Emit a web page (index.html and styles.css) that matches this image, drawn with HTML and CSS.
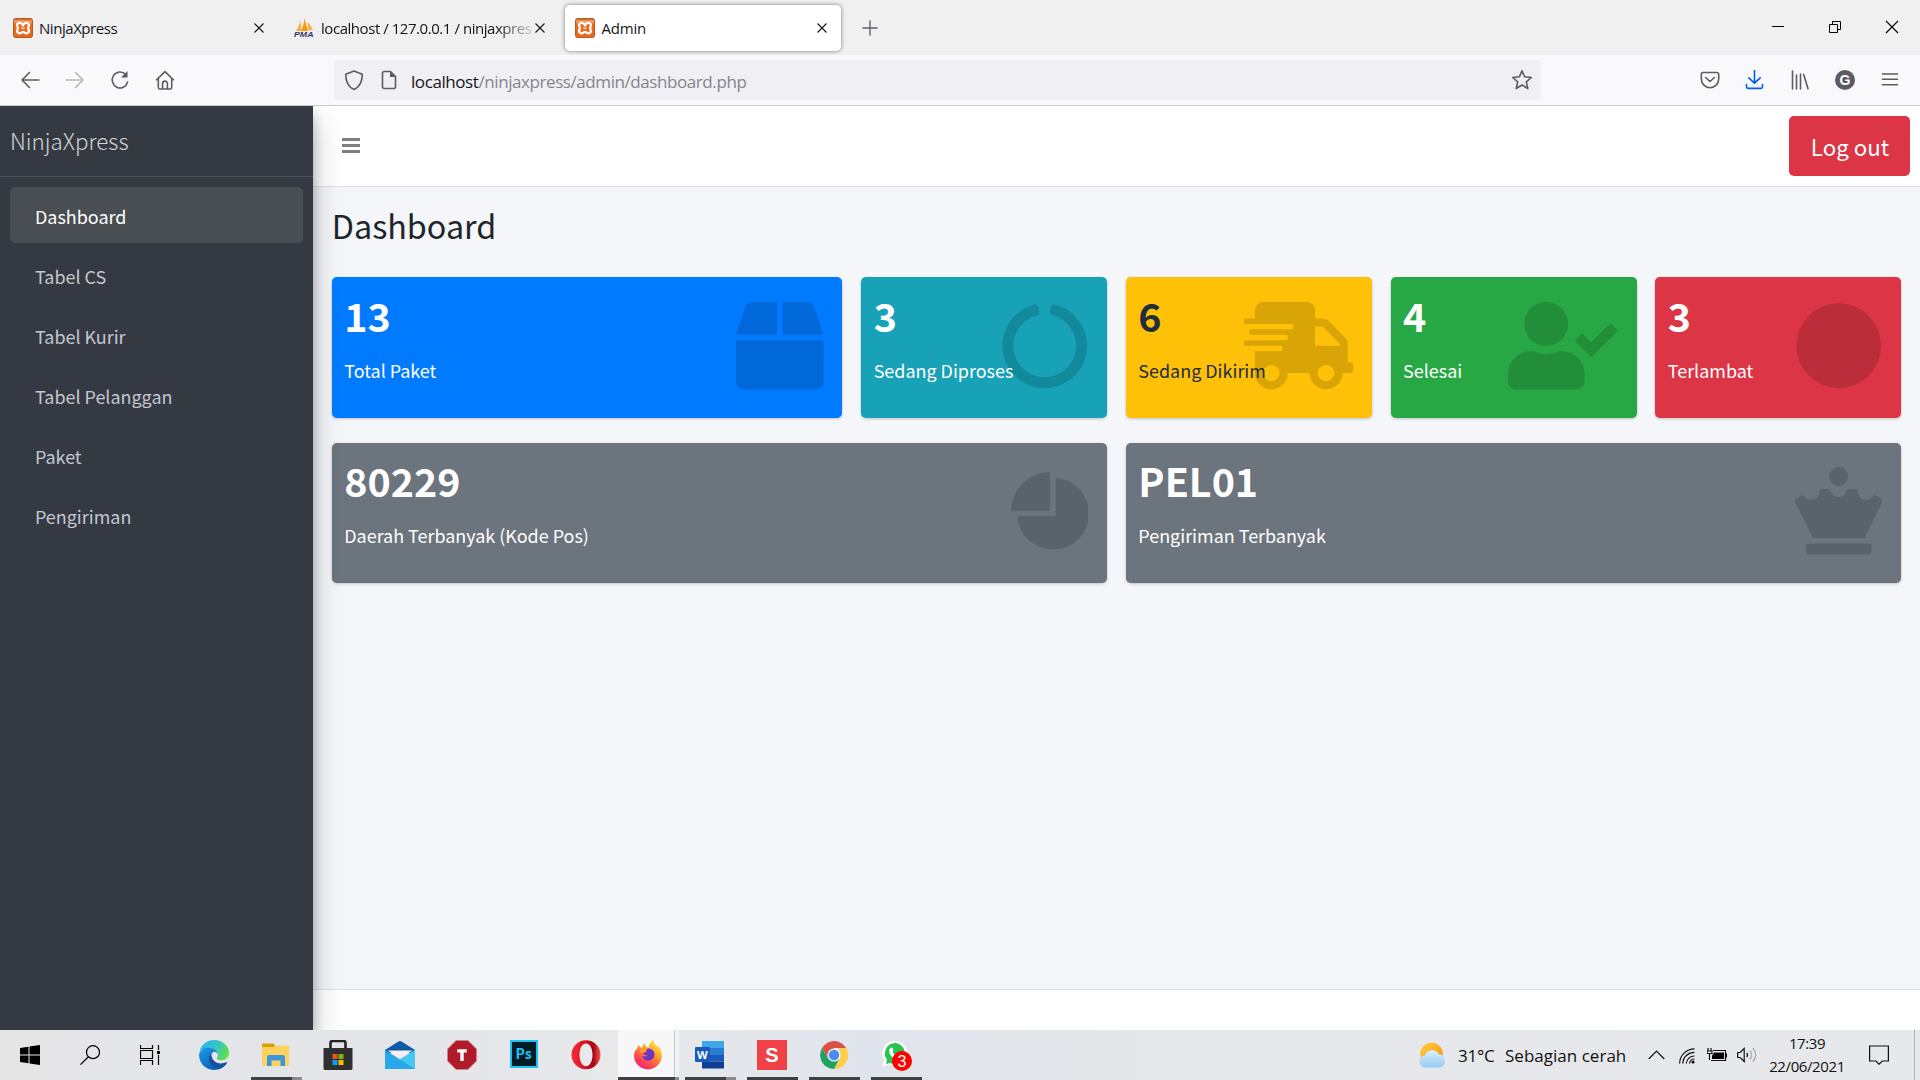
FILE: index.html
```html
<!DOCTYPE html>
<html lang="id">
<head>
<meta charset="utf-8">
<title>Admin</title>
<link rel="stylesheet" href="styles.css">
</head>
<body>
<svg class="defs" width="0" height="0">
  <defs>
    <linearGradient id="xamppFill" x1="0" y1="0" x2="0" y2="1"><stop offset="0" stop-color="#a9551b"/><stop offset=".14" stop-color="#f9a468"/><stop offset=".3" stop-color="#ec6f1c"/><stop offset="1" stop-color="#e9661a"/></linearGradient>
    <symbol id="xampp" viewBox="0 0 20 20">
      <rect x=".5" y=".5" width="19" height="19" rx="2" fill="url(#xamppFill)" stroke="#b65a1d"/>
      <path d="M10 7.500C9.500 5.500 8.200 4.800 6.700 4.800 4.200 4.800 3.600 6.800 4.400 8.300c.7 1.200.7 2.200 0 3.400-.8 1.700 0 3.600 2.300 3.600 1.700 0 1.800-1.500 3.300-1.500s1.600 1.500 3.300 1.500c2.300 0 3.100-1.900 2.300-3.600-.7-1.200-.7-2.200 0-3.400.8-1.500.2-3.500-2.300-3.500-1.500 0-2.800.7-3.300 2.700z" fill="none" stroke="#fff" stroke-width="2.300" stroke-linejoin="round"/>
      <path d="M8.300 10.200h3.400" fill="none" stroke="#fff" stroke-width="1"/>
    </symbol>
    <symbol id="cross" viewBox="0 0 10 10"><path d="M.5.5l9 9m0-9l-9 9" fill="none" stroke="currentColor" stroke-width="1.1"/></symbol>
  </defs>
</svg>

<div class="screen">
  <header class="tabstrip">
    <div class="tab tab-first">
      <svg class="favicon"><use href="#xampp"/></svg>
      <span class="tab-title">NinjaXpress</span>
      <svg class="tab-close"><use href="#cross"/></svg>
    </div>
    <div class="tab tab-second">
      <svg class="favicon" viewBox="0 0 20 20">
        <path d="M2 13C4 10 5.500 6 6 2l2 11z" fill="#f7b14a"/><path d="M7.500 13C9 9 10 4 10.300 0L14 13z" fill="#f89c0e"/><path d="M14 12c0-3 .3-6-.6-8.500C15.500 6 17.500 9 19 12z" fill="#fbb040"/>
        <text x="0" y="19" class="pma" textLength="19.500" lengthAdjust="spacingAndGlyphs">PMA</text>
      </svg>
      <span class="tab-title tab-title-faded">localhost / 127.0.0.1 / ninjaxpres</span>
      <svg class="tab-close"><use href="#cross"/></svg>
    </div>
    <div class="tab tab-active">
      <svg class="favicon"><use href="#xampp"/></svg>
      <span class="tab-title">Admin</span>
      <svg class="tab-close"><use href="#cross"/></svg>
    </div>
    <svg class="new-tab" viewBox="0 0 16 16"><path d="M8 .5v15M.5 8h15" stroke="#5b5b66" stroke-width="1.300"/></svg>
    <div class="window-controls">
      <svg width="14" height="14" viewBox="0 0 14 14"><path d="M1 6.500h12" stroke="#000"/></svg>
      <svg width="14" height="14" viewBox="0 0 14 14"><path d="M1.500 4.500h8v8h-8zM4.500 4V1.500h8v8H10" fill="none" stroke="#000"/></svg>
      <svg width="14" height="14" viewBox="0 0 14 14"><path d="M1 1l12 12m0-12L1 13" stroke="#000" stroke-width="1.100"/></svg>
    </div>
  </header>

  <div class="toolbar">
    <div class="nav-buttons">
      <svg width="20" height="20" viewBox="0 0 20 20"><path d="M19 10H2m7.500-7.500L2 10l7.500 7.500" class="line"/></svg>
      <svg width="20" height="20" viewBox="0 0 20 20" class="muted"><path d="M1 10h17m-7.500-7.500L18 10l-7.500 7.500" class="line"/></svg>
      <svg width="20" height="20" viewBox="0 0 20 20"><path d="M15.500 4.200A7.800 8 0 1 0 17.600 12" class="line"/><path d="M17.500 1v6.500H11z" fill="#5b5b66"/></svg>
      <svg width="20" height="20" viewBox="0 0 20 20"><path d="M1.600 9.800L10 1.600l8.400 8.200M3.300 8.500v9a1.500 1.500 0 0 0 1.500 1.500h10.400a1.500 1.500 0 0 0 1.500-1.500v-9M7.600 19v-5.500a2.400 2.400 0 0 1 4.800 0V19" class="line"/></svg>
    </div>
    <div class="urlbar">
      <svg width="20" height="22" viewBox="0 0 20 22"><path d="M10 2l8.300 3.300c0 7-2.500 12.700-8.300 15.200C4.200 18 1.700 12.300 1.700 5.300z" class="line"/></svg>
      <svg width="16" height="20" viewBox="0 0 16 20"><path d="M9.500 1.500H3.200A1.700 1.700 0 0 0 1.500 3.200v13.600a1.700 1.700 0 0 0 1.700 1.700h9.600a1.700 1.700 0 0 0 1.700-1.700V6.500z" class="line"/><path d="M9 1.500v5.500h5.500z" fill="#5b5b66"/></svg>
      <span class="url"><b>localhost</b>/ninjaxpress/admin/dashboard.php</span>
      <svg class="star" width="22" height="22" viewBox="0 0 22 22"><path d="M11 1.800l2.700 6 6.600.7-5 4.300 1.500 6.700L11 16l-5.800 3.500 1.500-6.700-5-4.300 6.600-.7z" class="line"/></svg>
    </div>
    <div class="tools">
      <svg width="20" height="20" viewBox="0 0 20 20"><path d="M3 2.500h14a1.700 1.700 0 0 1 1.700 1.700V9a8.700 8.700 0 0 1-17.400 0V4.200A1.700 1.700 0 0 1 3 2.500zM5.700 7.500l4.300 4 4.300-4" class="line"/></svg>
      <svg width="20" height="20" viewBox="0 0 20 20"><path d="M9.500 0v13M3.800 7.800L9.500 13.200l5.700-5.400M1.500 14.500v2.300a1.600 1.600 0 0 0 1.600 1.600h12.800a1.600 1.600 0 0 0 1.600-1.600v-2.300" class="line blue"/></svg>
      <svg width="20" height="20" viewBox="0 0 20 20"><path d="M2.500 1v18M6.500 5v14M10.500 4v15M13.700 4.500L18 18.800" class="line"/></svg>
      <span class="account">G</span>
      <svg width="20" height="20" viewBox="0 0 20 20"><path d="M2.500 4h15M2.500 9.300h15M2.500 14.700h15" class="line"/></svg>
    </div>
  </div>

  <div class="page">
    <aside class="sidebar">
      <div class="brand">NinjaXpress</div>
      <nav class="menu">
        <a class="menu-item current">Dashboard</a>
        <a class="menu-item">Tabel CS</a>
        <a class="menu-item">Tabel Kurir</a>
        <a class="menu-item">Tabel Pelanggan</a>
        <a class="menu-item">Paket</a>
        <a class="menu-item">Pengiriman</a>
      </nav>
    </aside>
    <div class="content">
      <div class="navbar">
        <svg width="18" height="16" viewBox="0 0 18 16"><path d="M0 1.500h18M0 7.500h18M0 13.500h18" stroke="#7f7f7f" stroke-width="3"/></svg>
        <button class="logout">Log out</button>
      </div>
      <main class="main">
        <h1 class="title">Dashboard</h1>
        <div class="boxes">
          <div class="box span4 primary"><strong>13</strong><span>Total Paket</span>
            <svg class="box-icon" viewBox="0 0 512 512"><path d="M509.500 184.600L458.900 32.800C452.400 13.200 434.100 0 413.400 0H272v192h238.700c-.4-2.500-.4-5-1.200-7.400zM240 0H98.600c-20.700 0-39 13.200-45.500 32.800L2.500 184.600c-.8 2.400-.8 4.900-1.200 7.400H240V0zM0 224v240c0 26.500 21.500 48 48 48h416c26.500 0 48-21.500 48-48V224H0z"/></svg>
          </div>
          <div class="box span2 info"><strong>3</strong><span>Sedang Diproses</span>
            <svg class="box-icon" viewBox="0 0 512 512"><path d="M288 39.056v16.659c0 10.804 7.281 20.159 17.686 23.066C383.204 100.434 440 171.518 440 256c0 101.689-82.295 184-184 184-101.689 0-184-82.295-184-184 0-84.470 56.786-155.564 134.312-177.219C216.719 75.874 224 66.517 224 55.712V39.064c0-15.709-14.834-27.153-30.046-23.234C86.603 43.482 7.394 141.206 8.003 257.332c.72 137.052 111.477 246.956 248.531 246.667C393.255 503.711 504 392.788 504 256c0-115.633-79.140-212.779-186.211-240.236C302.678 11.889 288 23.456 288 39.056z"/></svg>
          </div>
          <div class="box span2 warning"><strong>6</strong><span>Sedang Dikirim</span>
            <svg class="box-icon wide" viewBox="0 0 640 512"><path d="M624 352h-16V243.900c0-12.700-5.100-24.900-14.100-33.900L494 110.100c-9-9-21.200-14.100-33.900-14.100H416V48c0-26.500-21.500-48-48-48H112C85.500 0 64 21.500 64 48v48H8c-4.400 0-8 3.600-8 8v16c0 4.400 3.600 8 8 8h272c4.400 0 8 3.600 8 8v16c0 4.400-3.600 8-8 8H40c-4.400 0-8 3.600-8 8v16c0 4.400 3.600 8 8 8h208c4.400 0 8 3.600 8 8v16c0 4.400-3.600 8-8 8H8c-4.400 0-8 3.600-8 8v16c0 4.400 3.600 8 8 8h208c4.400 0 8 3.600 8 8v16c0 4.400-3.600 8-8 8H64v128c0 53 43 96 96 96s96-43 96-96h128c0 53 43 96 96 96s96-43 96-96h48c8.800 0 16-7.200 16-16v-32c0-8.800-7.200-16-16-16zM160 464c-26.500 0-48-21.500-48-48s21.500-48 48-48 48 21.500 48 48-21.500 48-48 48zm320 0c-26.500 0-48-21.500-48-48s21.500-48 48-48 48 21.500 48 48-21.500 48-48 48zm80-208H416V144h44.100l99.900 99.900V256z"/></svg>
          </div>
          <div class="box span2 success"><strong>4</strong><span>Selesai</span>
            <svg class="box-icon wide" viewBox="0 0 640 512"><path d="M224 256c70.700 0 128-57.300 128-128S294.700 0 224 0 96 57.300 96 128s57.300 128 128 128zm89.600 32h-16.700c-22.200 10.200-46.900 16-72.900 16s-50.600-5.800-72.900-16h-16.700C60.200 288 0 348.200 0 422.400V464c0 26.500 21.500 48 48 48h352c26.500 0 48-21.500 48-48v-41.600c0-74.200-60.200-134.400-134.400-134.400zm323-128.400l-27.800-28.100c-4.600-4.700-12.100-4.700-16.800-.1l-104.800 104-45.500-45.800c-4.600-4.700-12.100-4.700-16.800-.1l-28.100 27.900c-4.700 4.600-4.700 12.100-.1 16.800l81.700 82.300c4.600 4.700 12.100 4.700 16.800.1l141.300-140.200c4.600-4.700 4.700-12.200.1-16.800z"/></svg>
          </div>
          <div class="box span2 danger"><strong>3</strong><span>Terlambat</span>
            <svg class="box-icon" viewBox="0 0 512 512"><circle cx="256" cy="256" r="248"/></svg>
          </div>
          <div class="box span6 secondary"><strong>80229</strong><span>Daerah Terbanyak (Kode Pos)</span>
            <svg class="box-icon pie" viewBox="0 0 77 77"><path d="M39 0A39 39 0 0 0 0 39h38a1 1 0 0 0 1-1zM44.700 5.700A36 36 0 1 1 6.200 44H43.700a1 1 0 0 0 1-1z"/></svg>
          </div>
          <div class="box span6 secondary"><strong>PEL01</strong><span>Pengiriman Terbanyak</span>
            <svg class="box-icon queen" viewBox="0 0 512 512"><path d="M256 112a56 56 0 1 1 56-56 56 56 0 0 1-56 56zm176 336H80a16 16 0 0 0-16 16v32a16 16 0 0 0 16 16h352a16 16 0 0 0 16-16v-32a16 16 0 0 0-16-16zm72.870-263.840l-28.510-15.920c-7.440-5-16.910-2.460-22.290 4.680a47.590 47.590 0 0 1-47.230 18.230C383.700 186.860 368 164.930 368 141.400a13.400 13.400 0 0 0-13.400-13.400h-38.770c-6 0-11.610 4-12.860 9.910a48 48 0 0 1-93.940 0c-1.230-5.920-6.820-9.910-12.860-9.910H157.400a13.400 13.400 0 0 0-13.400 13.400c0 25.690-19 48.750-44.670 50.490a47.500 47.500 0 0 1-41.540-19.150c-5.280-7.090-14.730-9.450-22.090-4.540l-28.570 16a16 16 0 0 0-5.440 20.470L104.240 416h303.520l102.550-211.370a16 16 0 0 0-5.440-20.470z"/></svg>
          </div>
        </div>
      </main>
      <div class="footer"></div>
    </div>
  </div>

  <footer class="taskbar">
    <div class="system">
      <svg width="20" height="20" viewBox="0 0 20 20"><path d="M0 3l8.500-1.200v7.700H0zM9.500 1.600L20 0v9.500H9.500zM0 10.500h8.500v7.700L0 17zM9.500 10.500H20V20L9.500 18.400z"/></svg>
      <svg width="20" height="20" viewBox="0 0 20 20" class="thin"><circle cx="13" cy="7.200" r="6.500"/><path d="M8.400 11.800L.5 19.600"/></svg>
      <svg width="20" height="20" viewBox="0 0 20 20" class="thin"><path d="M.5 0v3.500h12V0M.5 20v-4.500h12V20M.5 5.500h12v8H.5zM18.500 0v5M18.500 10v10" /><path d="M17 6h3v3h-3z" fill="#000" stroke="none"/></svg>
    </div>
    <div class="apps">
      <div class="app"><svg viewBox="0 0 30 30">
        <defs><linearGradient id="e1" x1="0" y1=".2" x2="1" y2=".6"><stop offset="0" stop-color="#2bb3ef"/><stop offset=".5" stop-color="#2fc5c9"/><stop offset="1" stop-color="#62e04a"/></linearGradient><linearGradient id="e2" x1="0" y1="0" x2=".5" y2="1"><stop offset="0" stop-color="#1f9be6"/><stop offset="1" stop-color="#0b63c0"/></linearGradient></defs>
        <path d="M.8 11C2.500 4 8.500 0 15 0c8.500 0 15 6 15 13 0 4.500-3.500 7.200-7.500 7.200-3.500 0-5-1.200-4.700-2.200.3-.9 1.200-1.500 1.200-3.500C19 11 15 8.500 11 8.500 6 8.500 2.500 10 .8 11z" fill="url(#e1)"/>
        <path d="M0 15C.3 10.500 5 7.800 9.500 7.800c5 0 9 3 9.300 6.200-1-1.800-2.700-2.300-4-2.300-2.300 1.500-4 4-4 7.300 0 5 4 9.500 8.700 10.300A15 15 0 0 1 0 15z" fill="url(#e2)"/>
        <path d="M12.300 13.200C9.500 16 9 21 12 25c2.200 3 5.500 4.500 8 4.200 3.500-1 6.500-3.500 8-6.200.3-.8-.3-1-.8-.7-1.700.8-3.400 1.100-5.200 1.100-5.500 0-9.700-3.500-9.700-10.200z" fill="#1252a0"/></svg></div>
      <div class="app open more"><svg viewBox="0 0 30 30"><path d="M1 4.500a1 1 0 0 1 1-1h10.500l1.500 2V12H1z" fill="#e09c06"/><path d="M1 7h12.500l2-1.500H28V25a1 1 0 0 1-1 1H2a1 1 0 0 1-1-1z" fill="#ffd25e"/><path d="M6 26v-9a2 2 0 0 1 2-2h14a2 2 0 0 1 2 2v9h-4.500v-5.500h-9V26z" fill="#3a96dd"/></svg></div>
      <div class="app"><svg viewBox="0 0 30 30"><path d="M7.500 9V3a2 2 0 0 1 2-2h11a2 2 0 0 1 2 2v6" fill="none" stroke="#222" stroke-width="2.600"/><path d="M.5 8h29v20.500a1.500 1.500 0 0 1-1.500 1.500H2A1.500 1.500 0 0 1 .5 28.500z" fill="#303030"/><path fill="#f25022" d="M9.500 14h5v5h-5z"/><path fill="#7fba00" d="M15.500 14h5v5h-5z"/><path fill="#00a4ef" d="M9.500 20h5v5h-5z"/><path fill="#ffb900" d="M15.500 20h5v5h-5z"/></svg></div>
      <div class="app"><svg viewBox="0 0 30 30"><path d="M0 10l13.500-8.500a3 3 0 0 1 3 0L30 10v3H0z" fill="#0c59a4"/><path d="M0 10l15 9.500L30 10v19H0z" fill="#28a8ea"/><path d="M30 10v19L15 19.500z" fill="#45c7f4"/><path d="M2.500 10.500h25L15 18.500z" fill="#f3f1f0"/></svg></div>
      <div class="app"><svg viewBox="0 0 30 30"><path d="M9 .5h12L29.500 9v12L21 29.500H9L.5 21V9z" fill="#b11a2b" stroke="#d08a92" stroke-width=".7"/><path d="M10.300 9.300h9.400v3.200h-3V21h-3.400v-8.500h-3z" fill="#fff"/></svg></div>
      <div class="app"><svg viewBox="0 0 30 30"><path d="M1 0h28v28H1z" fill="#1cc3f5"/><path d="M3 2h24v24H3z" fill="#001d26"/><text x="6.500" y="19" class="ps">Ps</text></svg></div>
      <div class="app"><svg viewBox="0 0 30 30"><defs><linearGradient id="o1" x1="0" y1="0" x2="1" y2="0"><stop offset="0" stop-color="#fa2b3e"/><stop offset=".5" stop-color="#d3101f"/><stop offset=".75" stop-color="#9e0610"/><stop offset="1" stop-color="#ff5252"/></linearGradient></defs><path fill-rule="evenodd" d="M15 .3a14.500 14.500 0 1 0 0 29 14.500 14.500 0 1 0 0-29zm0 3.200c4 0 6.500 5 6.500 11.300S19 26.200 15 26.200 8.500 21 8.500 14.800 11 3.500 15 3.500z" fill="url(#o1)"/></svg></div>
      <div class="app open focus more"><svg viewBox="0 0 30 30"><defs><linearGradient id="f1" x1=".8" y1="0" x2=".2" y2="1"><stop offset="0" stop-color="#fff04a"/><stop offset=".35" stop-color="#ffa928"/><stop offset=".7" stop-color="#ff4a4c"/><stop offset="1" stop-color="#e51d83"/></linearGradient></defs><path d="M4.500 8c0-1.500.5-2.500 1-3 .5 1.500 2 2.500 3.500 3 0-2 1.500-4 3-5-.2 2 .5 3 2.500 4.500h1.500C15.500 4.500 18 1 21 0c-.5 3 1 4.500 3.500 6.500L25 6c1 1 3.800 4.500 3.800 9.500A13.900 13.900 0 0 1 1 15.500C1 12 3 9.500 4.500 8z" fill="url(#f1)"/><path d="M9.500 13c0-2 2-4 5.500-4.500 4 0 6.500 2.500 6.500 6a6 6 0 0 1-6 6.200c-3.500 0-6-2.200-6-5 1.500 1.200 4 1 5-.2-2.500.2-4-1.500-5-2.500z" fill="#6a35c9"/><path d="M7 10c2-1.500 5-2 8-1.500-1.500 1-2 2-1.500 3.500-1.500 0-2.500 1-4 1.200-1.500 0-2.500-1.200-2.500-3.200z" fill="#ff9a2a"/></svg></div>
      <div class="app open more"><svg viewBox="0 0 30 30"><path d="M7 1h22v7H7z" fill="#41a5ee"/><path d="M7 8h22v7H7z" fill="#2b7cd3"/><path d="M7 15h22v6.500H7z" fill="#185abd"/><path d="M7 21.500h22v7H7z" fill="#103f91"/><rect y="7" width="15" height="15" rx="1" fill="#185abd"/><text x="2" y="18.500" class="word">W</text></svg></div>
      <div class="app open"><svg viewBox="0 0 30 30"><path d="M0 0h30v30H0z" fill="#ef4146"/><text x="15" y="22" class="s-mark">S</text></svg></div>
      <div class="app open"><svg viewBox="0 0 30 30"><path d="M3 8A14 14 0 0 1 27.200 8H15L9.500 19z" fill="#dd5144"/><path d="M27.200 8A14 14 0 0 1 15 29l6-11-1-10z" fill="#ffcd46"/><path d="M3 8A14 14 0 0 0 15 29l5.500-10.500L9.500 19z" fill="#1da462"/><circle cx="15" cy="15" r="6.600" fill="#f1f1f1"/><circle cx="15" cy="15" r="5.200" fill="#4c8bf5"/></svg></div>
      <div class="app open"><svg class="chat" viewBox="0 0 32 31"><path d="M14 1A12.500 12.500 0 0 1 14 26c-2.500 0-4.500-.6-6-1.500L1 27l2-7A12.500 12.500 0 0 1 14 1z" fill="#fff"/><path d="M14 3A10.500 10.500 0 1 1 9 23l-4 1 1-4.200A10.500 10.500 0 0 1 14 3z" fill="#2bc451"/><path d="M9.500 8c1-1 2-.5 2.500 1 .5 1.500.3 2-.5 2.800 1 2.200 2.500 3.500 5 4.500L15 19c-4-1-7-5-6.800-8.500 0-1 .6-2 1.300-2.500z" fill="#fff"/><circle cx="21" cy="21" r="10" fill="#f00"/><text x="21" y="26.500" class="count">3</text></svg></div>
    </div>
    <div class="tray">
      <svg class="weather" width="28" height="26" viewBox="0 0 28 26"><defs><linearGradient id="w1" x1="0" y1="0" x2="1" y2="1"><stop offset="0" stop-color="#ffd23b"/><stop offset="1" stop-color="#f48a0c"/></linearGradient><linearGradient id="w2" x1="0" y1="0" x2="0" y2="1"><stop offset="0" stop-color="#dceffb"/><stop offset="1" stop-color="#93cbf2"/></linearGradient></defs><circle cx="12.500" cy="12" r="11.300" fill="url(#w1)"/><path d="M6.500 25.500A6 6 0 0 1 5.500 13.600 8 8 0 0 1 20 12.300a6.700 6.700 0 0 1 .8 13.200z" fill="url(#w2)"/></svg>
      <span class="temp">31°C</span><span class="sky">Sebagian cerah</span>
      <svg class="caret" width="17" height="10" viewBox="0 0 17 10"><path d="M.7 9l7.800-7.800L16.300 9" class="ink"/></svg>
      <svg class="wifi" width="16" height="16" viewBox="0 0 16 16"><path d="M.6 15.500A15 15 0 0 1 15.500.8M3.800 15.500A11.500 11.500 0 0 1 15.500 4.400M7.300 15.500A8 8 0 0 1 15.500 8M10.500 15.500a5 5 0 0 1 5-4.500" class="ink"/><circle cx="14" cy="14" r="1.600"/></svg>
      <svg class="battery" width="20" height="14" viewBox="0 0 20 14"><path d="M1 0v3M4 0v3M0 3h5v2.500H0zM2.500 5v7" class="ink"/><path d="M6 2.500h12.500v10H4" class="ink"/><path d="M7 4.500h10v6.500H5V7.500z"/><path d="M19 5.500h1v4h-1z"/></svg>
      <svg class="speaker" width="21" height="16" viewBox="0 0 21 16"><path d="M.7 5.500h2.500l4-4v13l-4-4H.7zM9.700 6a3 3 0 0 1 0 4" class="ink"/><path d="M12.700 3.500a6.300 6.300 0 0 1 0 9M15.800 1.200a9.500 9.500 0 0 1 0 13.600" class="ink dim"/></svg>
      <div class="clock"><span>17:39</span><span>22/06/2021</span></div>
      <svg class="notice" width="20" height="20" viewBox="0 0 20 20"><path d="M.6 1h18.800v15h-6L10 19.200 7 16H.6z" class="ink"/></svg>
      <i class="peek"></i>
    </div>
  </footer>
</div>
</body>
</html>
```
FILE: styles.css
```css
* { box-sizing: border-box; }
body { margin: 0; background: #fff; }
svg { display: block; flex: none; }
.defs { position: absolute; }
.screen {
  width: 1920px; height: 1080px; overflow: hidden;
  display: grid; grid-template-rows: 55px 51px 924px 50px;
  font-family: "Open Sans", "Noto Sans", sans-serif;
}

/* Tab strip */
.tabstrip { display: flex; align-items: center; background: #f0f0f0; }
.tab { display: flex; align-items: center; height: 46px; padding-top: 1px; font-size: 15px; line-height: 20px; color: #15141a; }
.tab-first { width: 281px; padding-left: 13px; }
.tab-second { width: 283px; padding-left: 13px; }
.tab-active { width: 276px; padding-left: 10px; margin-left: .5px; background: #fff; border-radius: 5px; box-shadow: 0 0 4px rgba(0,0,0,.5); }
.favicon { width: 20px; height: 20px; margin-right: 6px; }
.tab-second .favicon, .tab-active .favicon { margin-right: 7px; }
.tab-title { flex: 1; white-space: nowrap; letter-spacing: -.45px; }
.tab-active .tab-title { letter-spacing: -.2px; }
.tab-title-faded { flex: none; width: 211px; letter-spacing: -.45px; -webkit-mask-image: linear-gradient(90deg, #000 175px, transparent 218px); mask-image: linear-gradient(90deg, #000 175px, transparent 218px); }
.tab-close { width: 10px; height: 10px; margin-right: 17px; }
.tab-second .tab-close { margin: 0 0 0 3px; }
.tab-active .tab-close { margin-right: 14px; }
.new-tab { width: 16px; height: 16px; margin-left: 21px; }
.window-controls { display: flex; gap: 43px; margin: 0 21px 1px auto; }
.pma { font: italic bold 7.5px "Liberation Sans", sans-serif; fill: #35356b; }

/* Address toolbar */
.toolbar { display: flex; align-items: center; background: #f9f9fb; border-bottom: 1px solid #ccc; }
.line { fill: none; stroke: #5b5b66; stroke-width: 1.6; stroke-linecap: round; stroke-linejoin: round; }
.blue { stroke: #0061e0; }
.muted { opacity: .4; }
.nav-buttons { display: flex; gap: 25px; width: 334px; padding-left: 19.5px; }
.urlbar { display: flex; align-items: center; width: 1207px; height: 40px; padding: 0 8px 0 10px; background: #f0f0f4; border-radius: 5px; }
.urlbar svg:nth-child(2) { margin-left: 17px; }
.url { flex: 1; margin-left: 14px; padding-top: 4px; font-size: 17px; line-height: 24px; letter-spacing: -.42px; color: #85848c; }
.url b { font-weight: 400; color: #15141a; }
.tools { display: flex; gap: 25px; margin-left: auto; padding-right: 20px; }
.account { width: 20px; height: 20px; border-radius: 50%; background: #5b5b66; color: #fff; font: bold 14px/20px "Liberation Sans", sans-serif; text-align: center; }

/* Application */
.page { display: flex; font-family: "Noto Sans CJK SC", sans-serif; min-height: 0; overflow: hidden; }
.sidebar { width: 313px; background: #353a42; box-shadow: 0 14px 28px rgba(0,0,0,.25), 0 10px 10px rgba(0,0,0,.22); position: relative; z-index: 1; }
.brand { height: 71px; border-bottom: 1px solid #4b545c; padding: 0 10px; font-size: 22.4px; line-height: 69px; font-weight: 300; color: #d0d2d4; }
.menu { display: flex; flex-direction: column; gap: 4px; padding: 10px; }
.menu-item { height: 56px; padding: 1px 25px 0; border-radius: 5px; font-size: 17.95px; line-height: 57px; color: #c2c7d0; }
.current { background: #494e52; color: #fff; }
.content { flex: 1; display: flex; flex-direction: column; }
.navbar { height: 81px; display: flex; align-items: center; justify-content: space-between; padding: 0 10px 0 29px; background: #fff; border-bottom: 1px solid #dee2e6; }
.logout { width: 121px; height: 60px; padding: 0 0 0 1px; border: 0; border-radius: 5px; background: #dc3545; color: #fff; font: 22.3px/58px "Noto Sans CJK SC", sans-serif; }
.main { flex: 1; background: #f4f6f9; padding: 0 18.75px; }
.title { margin: 0; height: 90px; font-size: 32.3px; line-height: 76px; font-weight: 400; color: #212529; }
.boxes { display: grid; grid-template-columns: repeat(12, minmax(0, 1fr)); gap: 25px 18.75px; grid-template-rows: 141px 140px; }
.box { position: relative; display: flex; flex-direction: column; padding: 11px 12.5px; border-radius: 5px; color: #fff; box-shadow: 0 0 1px rgba(0,0,0,.125), 0 1px 3px rgba(0,0,0,.2); }
.box strong { font-size: 39.4px; line-height: 54px; font-weight: 700; position: relative; z-index: 1; }
.box span { font-size: 17.95px; line-height: 30px; margin-top: 13px; position: relative; z-index: 1; }
.secondary strong { margin-top: -1px; }
.box-icon { position: absolute; top: 25px; right: 18.75px; width: 87.5px; height: 87.5px; fill: rgba(0,0,0,.15); }
.wide { width: 109.4px; }
.pie { top: 29px; width: 77px; height: 77px; }
.queen { top: 24px; }
.span2 { grid-column: span 2; }
.span4 { grid-column: span 4; }
.span6 { grid-column: span 6; }
.primary { background: #007bff; }
.info { background: #17a2b8; }
.warning { background: #ffc107; color: #1f2d3d; }
.success { background: #28a745; }
.danger { background: #dc3545; }
.secondary { background: #6c757d; }
.footer { height: 41px; background: #fff; border-top: 1px solid #dee2e6; }

/* Taskbar */
.taskbar { display: flex; background: linear-gradient(90deg, #e5e5e6, #e3e5e9 20%, #e8e9eb 32%, #e0e4ec 45%, #e6e7ea 60%, #e6e8eb); }
.system { display: flex; align-items: center; gap: 40px; width: 183px; padding-left: 20px; }
.thin { fill: none; stroke: #000; stroke-width: 1.2; }
.apps { display: flex; }
.app { width: 62px; display: flex; justify-content: center; padding-top: 10px; }
.app svg { width: 30px; height: 30px; }
.app .chat { width: 32px; height: 31px; margin-left: 2px; }
.open { background: linear-gradient(#3f4242, #3f4242) 6px 100% / 51px 3px no-repeat; }
.more { background: linear-gradient(90deg, #3f4242 41px, #8b8c8d 41px) 6px 100% / 51px 3px no-repeat; }
.focus { background: linear-gradient(90deg, #3f4242 57px, #8b8c8d 57px) 1px 100% / 61px 3px no-repeat, linear-gradient(90deg, transparent 1px, #f7f7f8 1px, #f7f7f8 57px, #c9cacc 57px, #c9cacc 58px, #f0f1f2 58px); }
.ps { font: bold 14px "Noto Sans CJK SC", sans-serif; fill: #1cc3f5; }
.word { font: bold 11px "Open Sans", sans-serif; fill: #fff; }
.s-mark { font: bold 20px "Liberation Sans", sans-serif; fill: #fff; text-anchor: middle; }
.count { font: 16px "Liberation Sans", sans-serif; fill: #fff; text-anchor: middle; }
.tray { display: flex; align-items: center; margin-left: auto; color: #111; white-space: nowrap; }
.weather { margin-right: 1px; }
.temp, .sky { font-size: 17px; line-height: 24px; padding-top: 1px; }
.temp { width: 47px; margin-left: 10px; letter-spacing: -.2px; }
.sky { width: 121px; letter-spacing: .02px; }
.caret { margin-left: 22px; }
.wifi { margin-left: 14px; margin-top: 2px; }
.battery { margin-left: 12px; }
.speaker { margin-left: 10px; }
.clock { display: flex; flex-direction: column; width: 78px; margin-left: 10px; text-align: center; font-size: 15px; line-height: 23px; letter-spacing: -.4px; }
.notice { margin-left: 23px; }
.peek { width: 6px; height: 50px; margin-left: 25px; border-left: 1px solid #aeb0b3; }
.ink { fill: none; stroke: #111; stroke-width: 1.2; }
.dim { stroke: #a5a6a8; }
```
